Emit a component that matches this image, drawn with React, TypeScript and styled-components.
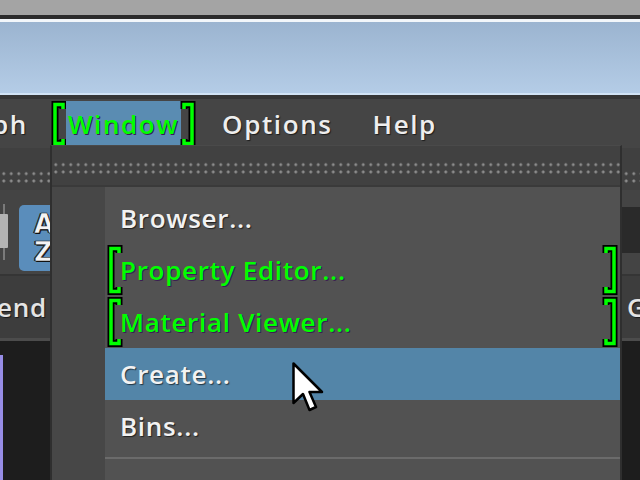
import styled, { createGlobalStyle } from "styled-components";

const GlobalStyle = createGlobalStyle`
  html, body {
    margin: 0;
    padding: 0;
    background: #444444;
  }
  body {
    font-family: "Open Sans", "DejaVu Sans", sans-serif;
  }
`;

const Screen = styled.div`
  width: 640px;
  height: 480px;
  overflow: hidden;
  display: flex;
  flex-direction: column;
  background: #444444;
`;

const Desktop = styled.div`
  height: 15px;
  background: #a4a4a4;
`;

const TitleBar = styled.div`
  height: 76px;
  border-top: 4px solid #2c2c2c;
  box-shadow: inset 0 3px 0 #f2f6fa, inset 0 -2px 0 #d2e4f6;
  background: linear-gradient(#9ab3cf, #b5cde7);
  border-bottom: 4px solid #363636;
`;

const MenuBar = styled.div`
  height: 49px;
  display: flex;
  align-items: center;
  background: #454545;
  color: #eeeeee;
  font-size: 26px;
  font-weight: 600;
  letter-spacing: 1.6px;
`;

const BarItem = styled.div<{ $offset?: number }>`
  margin-left: ${(p) => p.$offset ?? 0}px;
  white-space: nowrap;
  text-shadow: 1px 1px 1px rgba(0, 0, 0, 0.6);
`;

const Marked = styled.div<{ $offset?: number }>`
  display: flex;
  align-items: center;
  height: 46px;
  margin-left: ${(p) => p.$offset ?? 0}px;
`;

const Highlight = styled.div`
  height: 45px;
  padding: 0 2px;
  display: flex;
  align-items: center;
  background: #5a8cb2;
  color: #00ff00;
  text-shadow: 1px 1px 0 #3b1d52;
  margin: 0 -1px;
`;

const Workspace = styled.div`
  position: relative;
  flex: 1;
  display: flex;
  flex-direction: column;
`;

const Dots = styled.div<{ $start: number }>`
  height: 14px;
  background-image: radial-gradient(circle, #8d8d8d 1.2px, transparent 1.7px);
  background-size: 7.5px 7.3px;
  background-position: ${(p) => p.$start}px 0;
`;

const Shelf = styled.div`
  height: 42px;
  background: #404040;
  padding-top: 22px;
  box-sizing: border-box;
`;

const ToolRow = styled.div`
  height: 84px;
  display: flex;
  align-items: center;
  justify-content: space-between;
  background: #444444;
`;

const LeftTools = styled.div`
  display: flex;
  align-items: center;
  gap: 10px;
`;

const SortButton = styled.div`
  width: 40px;
  height: 66px;
  margin-top: 12px;
  border-radius: 5px;
  background: #5a8dbb;
  box-sizing: border-box;
  padding-left: 15px;
  display: flex;
  flex-direction: column;
  justify-content: center;
  color: #f4f4f4;
  font-family: "DejaVu Sans", sans-serif;
  font-weight: bold;
  font-size: 26px;
  line-height: 28px;
  -webkit-text-stroke: 0.6px #111;
  text-shadow: 1px 1px 0 #111, -1px 0 0 #111;
`;

const Field = styled.div`
  width: 40px;
  height: 46px;
  margin-top: -4px;
  background: #2a2a2a;
`;

const LabelRow = styled.div`
  height: 62px;
  display: flex;
  align-items: center;
  justify-content: space-between;
  background: #3d3d3d;
  border-top: 2px solid #353535;
  border-bottom: 3px solid #4c4c4c;
  color: #e4e4e4;
  font-size: 26px;
  font-weight: 600;
  letter-spacing: 0.8px;
`;

const LabelCell = styled.div<{ $width: number; $end?: boolean }>`
  width: ${(p) => p.$width}px;
  overflow: hidden;
  display: flex;
  justify-content: ${(p) => (p.$end ? "flex-end" : "flex-start")};
  white-space: nowrap;
  text-shadow: 1px 1px 1px rgba(0, 0, 0, 0.6);
`;

const DarkPanel = styled.div`
  flex: 1;
  background: #1d1d1d;
  padding-top: 14px;
`;

const PanelEdge = styled.div`
  width: 3px;
  height: 100%;
  background: #978de6;
`;

const Dropdown = styled.div`
  position: absolute;
  left: 50px;
  top: -3px;
  width: 572px;
  bottom: -20px;
  box-sizing: border-box;
  border-left: 2px solid #2f2f2f;
  border-right: 2px solid #2f2f2f;
  border-top: 1px solid #4a4a4a;
  display: flex;
  flex-direction: column;
  background: #525252;
`;

const TearOff = styled.div`
  height: 41px;
  box-sizing: border-box;
  padding-top: 15px;
  background: #414141;
  border-bottom: 2px solid #3a3a3a;
`;

const MenuBody = styled.div`
  flex: 1;
  display: flex;
`;

const Gutter = styled.div`
  width: 53px;
  background: #474747;
`;

const Items = styled.div`
  flex: 1;
  padding-top: 5px;
  display: flex;
  flex-direction: column;
  font-size: 26px;
  font-weight: 600;
  letter-spacing: 0.7px;
`;

const Item = styled.div<{ $active?: boolean; $marked?: boolean }>`
  height: 52px;
  display: flex;
  align-items: center;
  padding: 0 2px 0 ${(p) => (p.$marked ? 2 : 15)}px;
  background: ${(p) => (p.$active ? "#5385a8" : "transparent")};
  color: ${(p) => (p.$marked ? "#00ff00" : "#f2f2f2")};
  text-shadow: ${(p) =>
    p.$marked ? "1px 1px 0 #3b1d52" : "1px 1px 1px rgba(0, 0, 0, 0.6)"};
`;

const ItemText = styled.span<{ $marked?: boolean }>`
  flex: 1;
  margin-left: ${(p) => (p.$marked ? -3 : 0)}px;
  white-space: nowrap;
`;

const Separator = styled.div`
  height: 2px;
  margin-top: 5px;
  background: #6b6b6b;
`;

const Cursor = styled.svg`
  position: absolute;
  left: 292px;
  top: 214px;
`;

const Bracket = ({ side, h }: { side: "l" | "r"; h: number }) => {
  const d =
    side === "l"
      ? `M12 8 V3.5 H4 V${h - 3.5} H12 V${h - 8}`
      : `M4 8 V3.5 H12 V${h - 3.5} H4 V${h - 8}`;
  return (
    <svg width="16" height={h} viewBox={`0 0 16 ${h}`}>
      <path d={d} fill="none" stroke="#000" strokeWidth="7" />
      <path d={d} fill="none" stroke="#00ff00" strokeWidth="3.5" />
    </svg>
  );
};

const App = () => {
  return (
    <>
      <GlobalStyle />
      <Screen>
        <Desktop />
        <TitleBar />
        <MenuBar>
          <BarItem $offset={-58}>Graph</BarItem>
          <Marked $offset={23}>
            <Bracket side="l" h={46} />
            <Highlight>Window</Highlight>
            <Bracket side="r" h={46} />
          </Marked>
          <BarItem $offset={26}>Options</BarItem>
          <BarItem $offset={40}>Help</BarItem>
        </MenuBar>
        <Workspace>
          <Shelf>
            <Dots $start={0} />
          </Shelf>
          <ToolRow>
            <LeftTools>
              <svg width="9" height="56" viewBox="0 0 9 56">
                <rect x="3" y="0" width="2" height="56" fill="#7a7a7a" />
                <rect x="-2" y="10" width="10" height="34" rx="1" fill="#b3b3b3" />
              </svg>
              <SortButton>
                <span>A</span>
                <span>Z</span>
              </SortButton>
            </LeftTools>
            <Field />
          </ToolRow>
          <LabelRow>
            <LabelCell $width={47} $end>
              Legend
            </LabelCell>
            <LabelCell $width={13}>Graph</LabelCell>
          </LabelRow>
          <DarkPanel>
            <PanelEdge />
          </DarkPanel>

          <Dropdown>
            <TearOff>
              <Dots $start={0} />
            </TearOff>
            <MenuBody>
              <Gutter />
              <Items>
                <Item>
                  <ItemText>Browser...</ItemText>
                </Item>
                <Item $marked>
                  <Bracket side="l" h={50} />
                  <ItemText $marked>Property Editor...</ItemText>
                  <Bracket side="r" h={50} />
                </Item>
                <Item $marked>
                  <Bracket side="l" h={50} />
                  <ItemText $marked>Material Viewer...</ItemText>
                  <Bracket side="r" h={50} />
                </Item>
                <Item $active>
                  <ItemText>Create...</ItemText>
                </Item>
                <Item>
                  <ItemText>Bins...</ItemText>
                </Item>
                <Separator />
              </Items>
            </MenuBody>
          </Dropdown>

          <Cursor width="34" height="52" viewBox="0 0 34 52">
            <path
              d="M1.5 1.5 V41 L11 32 L17.5 48 L24 45 L17.5 30 H30 Z"
              fill="#ffffff"
              stroke="#000000"
              strokeWidth="2.5"
              strokeLinejoin="round"
            />
          </Cursor>
        </Workspace>
      </Screen>
    </>
  );
};

export default App;
